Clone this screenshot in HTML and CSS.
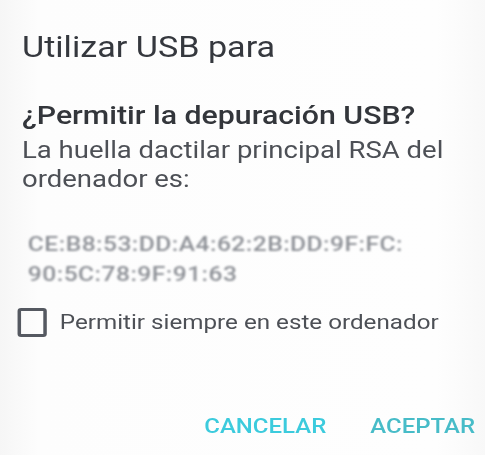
FILE: index.html
```html
<!DOCTYPE html>
<html lang="es">
<head>
<meta charset="utf-8">
<title>Depuración USB</title>
<link rel="stylesheet" href="styles.css">
</head>
<body>
<div class="dialog">
  <h1 class="title">Utilizar USB para</h1>
  <h2 class="heading">¿Permitir la depuración USB?</h2>
  <p class="body">La huella dactilar principal RSA del ordenador es:</p>
  <p class="fingerprint">CE:B8:53:DD:A4:62:2B:DD:9F:FC:<br>90:5C:78:9F:91:63</p>
  <label class="check-row">
    <span class="checkbox"></span>
    <span class="check-label">Permitir siempre en este ordenador</span>
  </label>
  <div class="actions">
    <span class="btn btn-cancel">CANCELAR</span>
    <span class="btn btn-ok">ACEPTAR</span>
  </div>
</div>
</body>
</html>
```
FILE: styles.css
```css
html, body {
  margin: 0;
  padding: 0;
}
body {
  width: 485px;
  height: 455px;
  overflow: hidden;
  background: linear-gradient(90deg, #f6f6f6 0%, #fdfdfd 8%, #fefefe 90%, #f8f8f8 100%);
  font-family: Roboto, "Liberation Sans", sans-serif;
}
.dialog {
  box-sizing: border-box;
  width: 414.5px;
  display: flex;
  flex-direction: column;
  padding: 30px 8.5px 0 18.8px;
  transform: scaleX(1.17);
  transform-origin: 0 0;
}
.title {
  margin: 0;
  font-size: 29.2px;
  line-height: 34px;
  font-weight: 400;
  color: #35383e;
}
.heading {
  margin: 36px 0 0;
  font-size: 25.9px;
  line-height: 31px;
  font-weight: 500;
  color: #33363b;
}
.body {
  margin: 5px 0 0;
  font-size: 23.5px;
  line-height: 29px;
  color: #4d5056;
}
.fingerprint {
  margin: 35px 0 0 5px;
  font-size: 21px;
  line-height: 30px;
  font-weight: 500;
  color: #8e9197;
  letter-spacing: 0.4px;
  filter: blur(1.1px);
}
.check-row {
  display: flex;
  align-items: center;
  gap: 11px;
  margin: 18px 0 0 -4.3px;
}
.checkbox {
  width: 19.6px;
  height: 23px;
  border: 3px solid #555961;
  border-radius: 3px;
  flex: none;
}
.check-label {
  font-size: 20.7px;
  line-height: 30px;
  color: #4d5056;
}
.actions {
  display: flex;
  justify-content: flex-end;
  gap: 37.6px;
  margin-top: 76px;
}
.btn {
  font-size: 20.5px;
  line-height: 26px;
  font-weight: 500;
}
.btn-cancel { color: #3ccbdd; }
.btn-ok { color: #47bcc8; }
```
